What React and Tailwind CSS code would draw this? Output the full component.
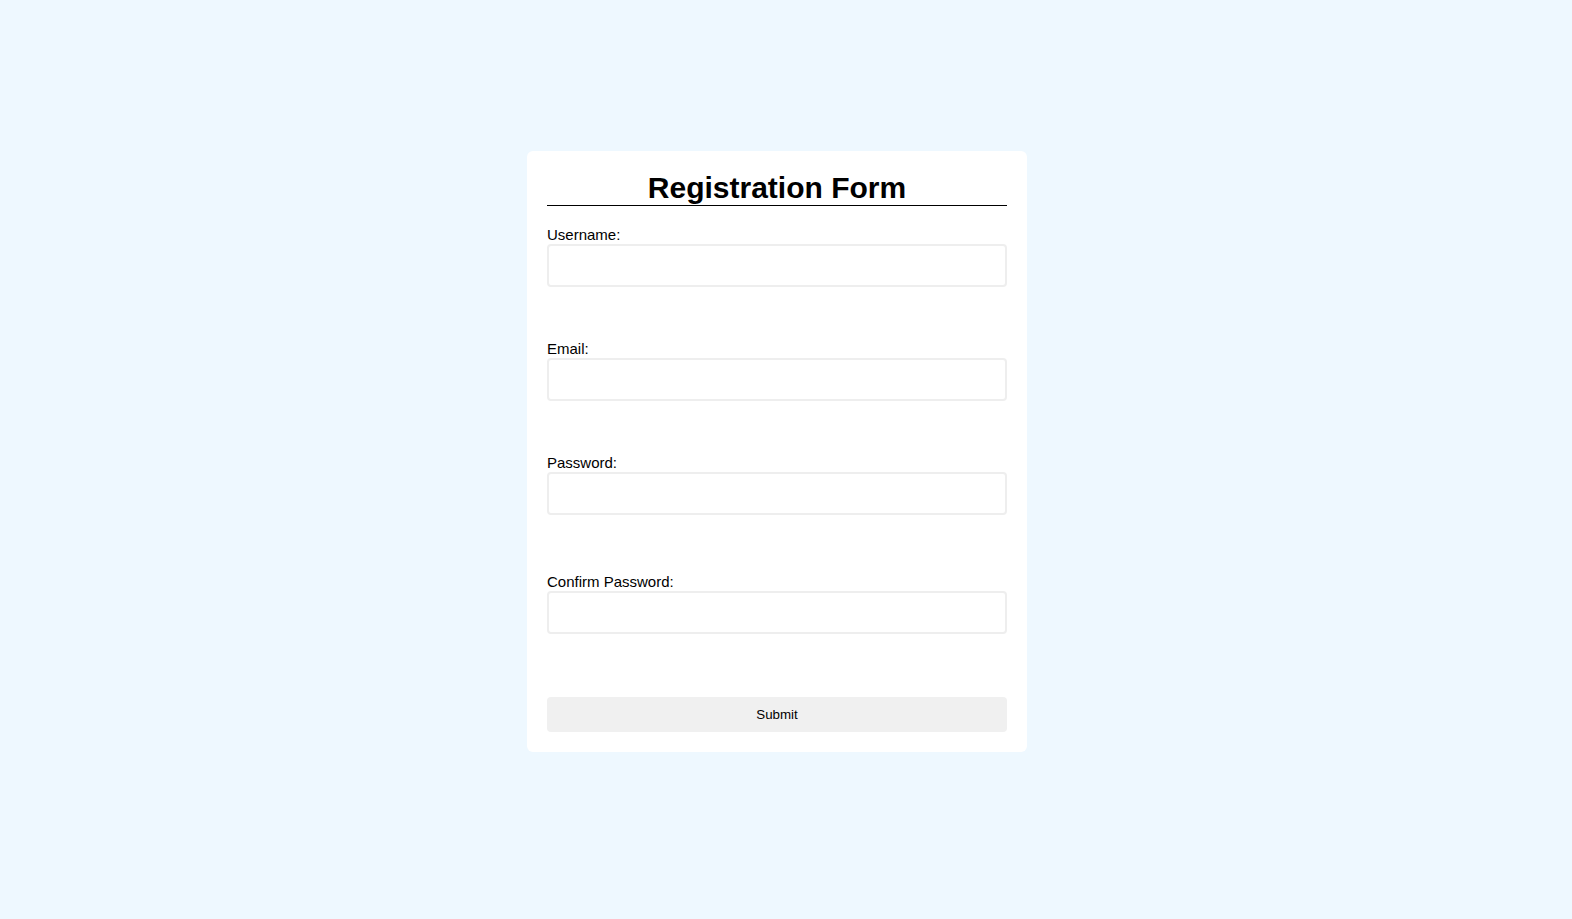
import React from 'react';

const fields = [
  { id: 'username', label: 'Username:', type: 'text', gap: 'mb-[53px]' },
  { id: 'email', label: 'Email:', type: 'email', gap: 'mb-[53px]' },
  { id: 'password', label: 'Password:', type: 'password', gap: 'mb-[58px]' },
  { id: 'confirm', label: 'Confirm Password:', type: 'password', gap: 'mb-[63px]' },
];

export default function App() {
  return (
    <div className="min-h-screen bg-[#eef8ff] pt-[151px] font-['Liberation_Sans',Arial,sans-serif] text-black">
      <div className="ml-[527px] w-[500px] rounded-md bg-white p-5">
        <h2 className="mb-5 border-b border-black text-center text-[30px] font-bold leading-[34px]">
          Registration Form
        </h2>
        <form onSubmit={(e) => e.preventDefault()}>
          {fields.map((f) => (
            <div key={f.id} className={f.gap}>
              <label htmlFor={f.id} className="block text-[15px] leading-[18px]">
                {f.label}
              </label>
              <input
                id={f.id}
                type={f.type}
                className="block h-[43px] w-full rounded border-2 border-[#eee] bg-white px-2.5 text-base outline-none"
              />
            </div>
          ))}
          <button
            type="submit"
            className="block h-[35px] w-full rounded bg-[#f0f0f0] text-[13.33px] text-black"
          >
            Submit
          </button>
        </form>
      </div>
    </div>
  );
}
